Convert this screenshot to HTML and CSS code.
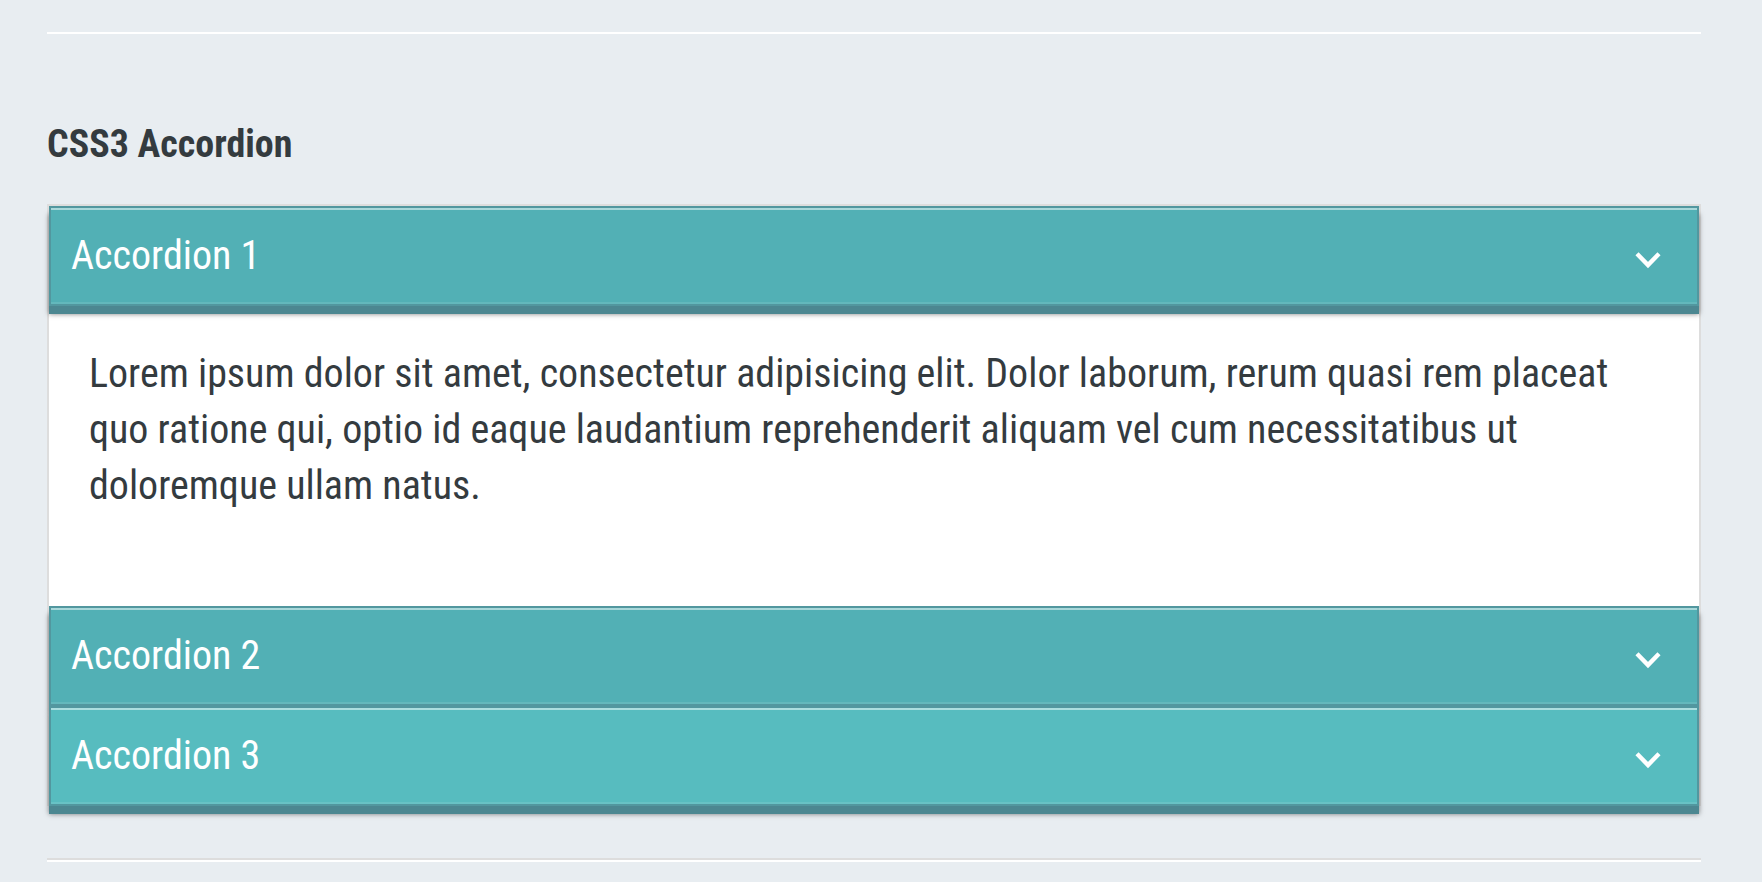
FILE: index.html
```
<!DOCTYPE html>
<html lang="en">
<head>
<meta charset="utf-8">
<meta name="viewport" content="width=device-width, initial-scale=1">
<title>CSS3 Accordion</title>
<link rel="stylesheet" href="styles.css">
</head>
<body>
<main class="page">
  <hr class="rule rule-top">
  <h2 class="title">CSS3 Accordion</h2>
  <div class="accordion">
    <button class="header header-active" type="button" aria-expanded="true" aria-controls="panel-1">
      <span>Accordion 1</span>
      <svg class="chevron" viewBox="0 0 26 18" aria-hidden="true"><path d="M2 2.8 13 14 24 2.8"/></svg>
    </button>
    <div class="panel" id="panel-1">
      <p class="text">Lorem ipsum dolor sit amet, consectetur adipisicing elit. Dolor laborum, rerum quasi rem placeat quo ratione qui, optio id eaque laudantium reprehenderit aliquam vel cum necessitatibus ut doloremque ullam natus.</p>
    </div>
    <button class="header header-active" type="button" aria-expanded="false">
      <span>Accordion 2</span>
      <svg class="chevron" viewBox="0 0 26 18" aria-hidden="true"><path d="M2 2.8 13 14 24 2.8"/></svg>
    </button>
    <button class="header" type="button" aria-expanded="false">
      <span>Accordion 3</span>
      <svg class="chevron" viewBox="0 0 26 18" aria-hidden="true"><path d="M2 2.8 13 14 24 2.8"/></svg>
    </button>
  </div>
  <hr class="rule">
</main>
</body>
</html>
```
FILE: styles.css
```
* {
  box-sizing: border-box;
}

body {
  margin: 0;
  background: #e8edf1;
  color: #343b3f;
  font-family: "Roboto Condensed", Roboto, sans-serif;
  font-size: 40px;
  line-height: 56px;
}

.page {
  padding: 32px 61px 20px 47px;
}

.rule {
  margin: 0;
  border: 0;
  border-top: 2px solid #ddd;
  border-bottom: 2px solid #fff;
}

.rule-top {
  border-top: 0;
}

.title {
  margin: 82px 0 32px;
  font-size: 38px;
  font-weight: 700;
}

.accordion {
  margin-bottom: 52px;
  border: 2px solid #ddd;
  border-bottom: 0;
}

.header {
  position: relative;
  display: flex;
  align-items: center;
  justify-content: space-between;
  width: 100%;
  height: 100px;
  padding: 0 36px 0 20px;
  border: 2px solid #52979f;
  background: #57bcbf;
  box-shadow:
    inset 0 2px 0 rgba(255, 255, 255, 0.5),
    inset 0 -2px 0 rgba(255, 255, 255, 0.1),
    0 8px 0 #4c8791,
    0 8px 5px rgba(0, 0, 0, 0.5);
  color: #fff;
  font: inherit;
  text-align: left;
  cursor: pointer;
}

.header-active {
  background: #52b0b5;
}

.chevron {
  width: 26px;
  height: 18px;
  margin-top: 8px;
  fill: none;
  stroke: #fff;
  stroke-width: 4.4;
}

.panel {
  min-height: 300px;
  padding: 40px;
  background: #fff;
}

.text {
  margin: 0;
}
```
